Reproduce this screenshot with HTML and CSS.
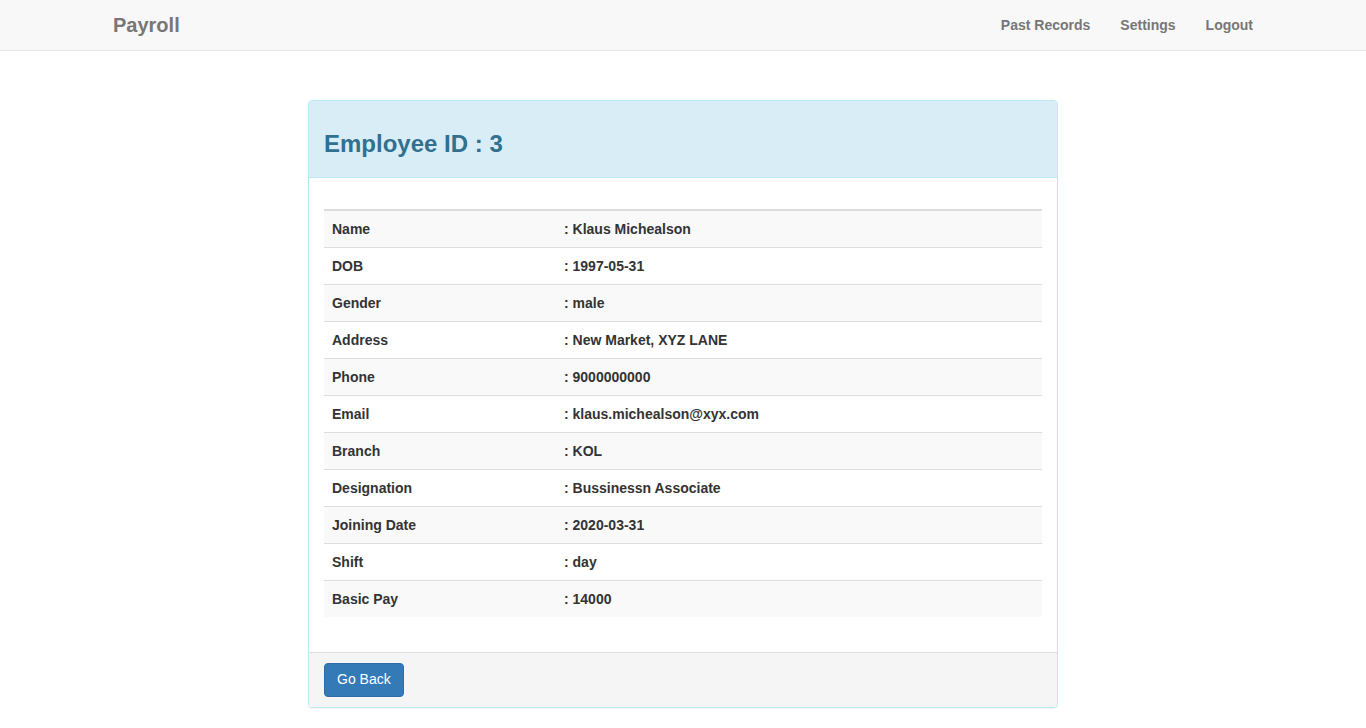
FILE: index.html
```html
<!DOCTYPE html>
<html>
<head>
<meta charset="utf-8">
<title>Payroll</title>
<link rel="stylesheet" href="styles.css">
</head>
<body>
<nav class="navbar">
  <div class="nav-inner">
    <a class="brand" href="#">Payroll</a>
    <ul class="nav-links">
      <li><a href="#">Past Records</a></li>
      <li><a href="#">Settings</a></li>
      <li><a href="#">Logout</a></li>
    </ul>
  </div>
</nav>
<main class="page">
  <section class="panel">
    <div class="panel-heading">
      <h3>Employee ID : 3</h3>
    </div>
    <div class="panel-body">
      <table class="info">
        <tbody>
          <tr><th>Name</th><td>: Klaus Michealson</td></tr>
          <tr><th>DOB</th><td>: 1997-05-31</td></tr>
          <tr><th>Gender</th><td>: male</td></tr>
          <tr><th>Address</th><td>: New Market, XYZ LANE</td></tr>
          <tr><th>Phone</th><td>: 9000000000</td></tr>
          <tr><th>Email</th><td>: klaus.michealson@xyx.com</td></tr>
          <tr><th>Branch</th><td>: KOL</td></tr>
          <tr><th>Designation</th><td>: Bussinessn Associate</td></tr>
          <tr><th>Joining Date</th><td>: 2020-03-31</td></tr>
          <tr><th>Shift</th><td>: day</td></tr>
          <tr><th>Basic Pay</th><td>: 14000</td></tr>
        </tbody>
      </table>
    </div>
    <div class="panel-footer">
      <button class="btn-primary" type="button">Go Back</button>
    </div>
  </section>
</main>
</body>
</html>
```
FILE: styles.css
```css
* { box-sizing: border-box; }
html, body {
  margin: 0;
  padding: 0;
  background: #fff;
  font-family: "Liberation Sans", Arial, Helvetica, sans-serif;
  font-size: 14px;
  line-height: 1.42857;
  color: #333;
}
a { text-decoration: none; }

.navbar {
  background: #f8f8f8;
  border-bottom: 1px solid #e7e7e7;
  height: 51px;
}
.nav-inner {
  width: 1170px;
  margin: 0 auto;
  display: flex;
  justify-content: space-between;
  align-items: stretch;
  height: 50px;
}
.brand {
  display: block;
  padding: 15px;
  font-size: 20px;
  font-weight: bold;
  line-height: 20px;
  color: #777;
}
.nav-links {
  list-style: none;
  margin: 0;
  padding: 0;
  display: flex;
}
.nav-links a {
  display: block;
  padding: 15px;
  line-height: 20px;
  font-weight: bold;
  color: #777;
}

.page {
  padding-top: 49px;
  display: flex;
  justify-content: center;
}
.panel {
  width: 750px;
  background: #fff;
  border: 1px solid #bce8f1;
  border-radius: 4px;
  box-shadow: 0 1px 1px rgba(0,0,0,.05);
  margin-bottom: 20px;
}
.panel-heading {
  background: #d9edf7;
  color: #31708f;
  border-bottom: 1px solid #bce8f1;
  border-radius: 3px 3px 0 0;
  padding: 10px 15px;
}
.panel-heading h3 {
  margin: 20px 0 10px;
  font-size: 24px;
  line-height: 1.1;
  font-weight: bold;
}
.panel-body {
  padding: 31px 15px 15px;
}
.info {
  width: 100%;
  border-collapse: collapse;
  border-spacing: 0;
  border-top: 2px solid #ddd;
  margin-bottom: 20px;
}
.info th, .info td {
  text-align: left;
  font-weight: bold;
  padding: 8px;
  line-height: 20px;
  vertical-align: top;
  border-top: 1px solid #ddd;
}
.info tr:first-child th, .info tr:first-child td { border-top: 0; }
.info th { width: 232px; }
.info tr:nth-child(odd) { background: #f9f9f9; }

.panel-footer {
  background: #f5f5f5;
  border-top: 1px solid #ddd;
  border-radius: 0 0 3px 3px;
  padding: 10px 15px;
}
.btn-primary {
  font-family: inherit;
  font-size: 14px;
  line-height: 1.42857;
  padding: 6px 12px;
  color: #fff;
  background: #337ab7;
  border: 1px solid #2e6da4;
  border-radius: 4px;
  cursor: pointer;
}
```
